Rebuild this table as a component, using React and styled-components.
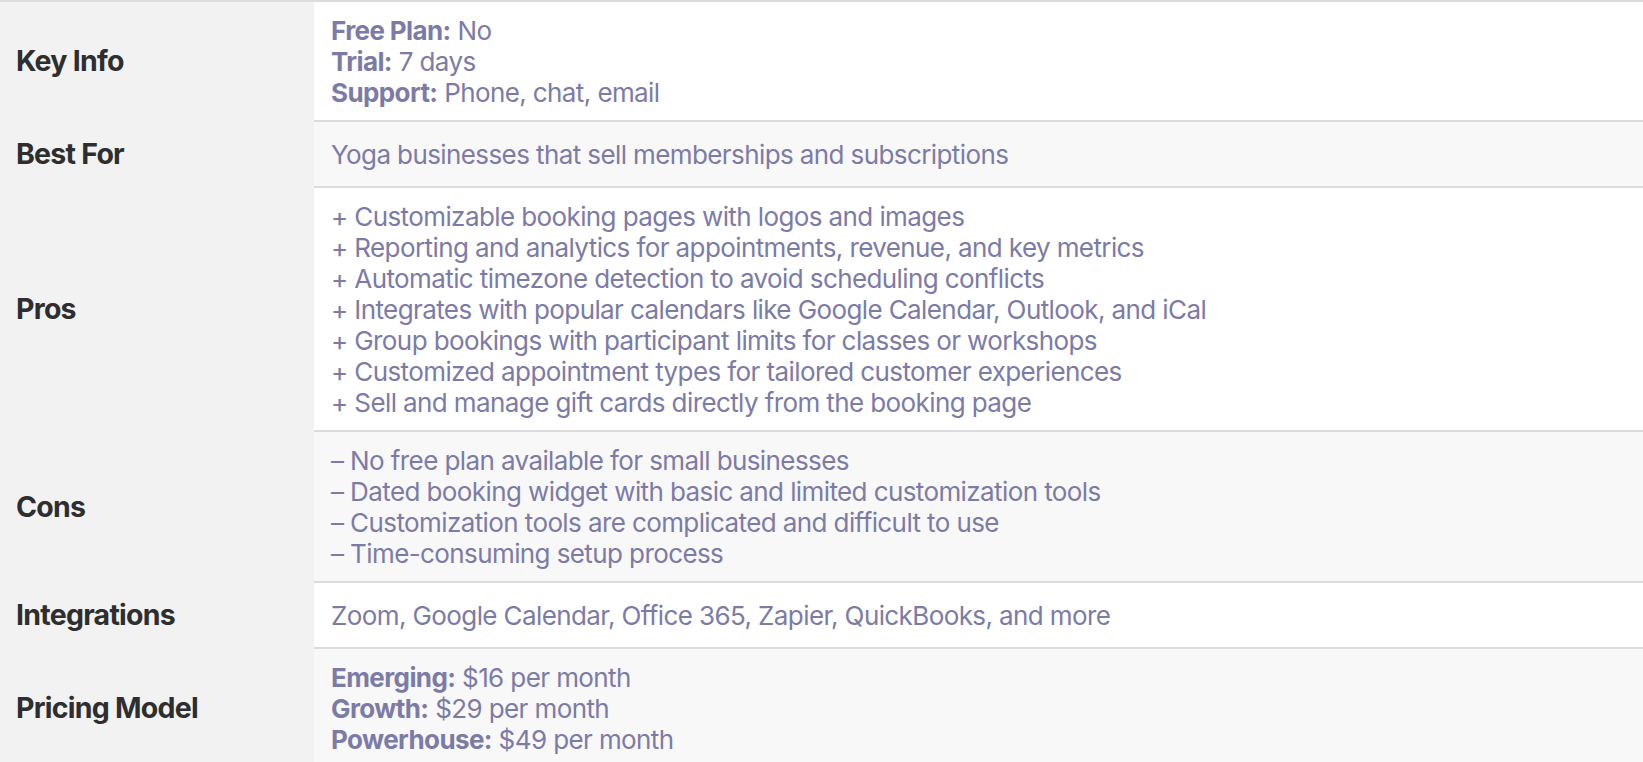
import React from "react";
import styled, { createGlobalStyle } from "styled-components";

const Global = createGlobalStyle`
  html, body { margin: 0; padding: 0; background: #ffffff; }
  body { font-family: Inter, "Noto Sans", sans-serif; }
`;

const Table = styled.div`
  display: grid;
  grid-template-columns: 314px 1fr;
  border-top: 2px solid #dcdcdc;
  width: 100%;
`;

const Label = styled.div`
  background: #f2f2f2;
  display: flex;
  align-items: center;
  padding: 16px;
  font-size: 28.5px;
  line-height: 32px;
  font-weight: 700;
  letter-spacing: -0.75px;
  color: #2e2e2e;
  border-bottom: 2px solid #f2f2f2;
`;

const Cell = styled.div`
  background: ${(p) => (p.$shade ? "#f8f8f8" : "#ffffff")};
  border-bottom: 2px solid #dcdcdc;
  padding: 12.5px 17px;
  display: flex;
  flex-direction: column;
  justify-content: center;
  font-size: 26px;
  line-height: 31px;
  letter-spacing: -0.6px;
  color: #7c7ba7;
`;

const Line = styled.div`
  white-space: nowrap;
`;

const Strong = styled.b`
  font-weight: 700;
`;

const rows = [
  {
    label: "Key Info",
    lines: [
      ["Free Plan:", " No"],
      ["Trial:", " 7 days"],
      ["Support:", " Phone, chat, email"],
    ],
  },
  { label: "Best For", lines: [[null, "Yoga businesses that sell memberships and subscriptions"]] },
  {
    label: "Pros",
    lines: [
      [null, "+ Customizable booking pages with logos and images"],
      [null, "+ Reporting and analytics for appointments, revenue, and key metrics"],
      [null, "+ Automatic timezone detection to avoid scheduling conflicts"],
      [null, "+ Integrates with popular calendars like Google Calendar, Outlook, and iCal"],
      [null, "+ Group bookings with participant limits for classes or workshops"],
      [null, "+ Customized appointment types for tailored customer experiences"],
      [null, "+ Sell and manage gift cards directly from the booking page"],
    ],
  },
  {
    label: "Cons",
    lines: [
      [null, "– No free plan available for small businesses"],
      [null, "– Dated booking widget with basic and limited customization tools"],
      [null, "– Customization tools are complicated and difficult to use"],
      [null, "– Time-consuming setup process"],
    ],
  },
  { label: "Integrations", lines: [[null, "Zoom, Google Calendar, Office 365, Zapier, QuickBooks, and more"]] },
  {
    label: "Pricing Model",
    lines: [
      ["Emerging:", " $16 per month"],
      ["Growth:", " $29 per month"],
      ["Powerhouse:", " $49 per month"],
    ],
  },
];

export default function App() {
  return (
    <>
      <Global />
      <Table>
        {rows.map((r, i) => (
          <React.Fragment key={r.label}>
            <Label>{r.label}</Label>
            <Cell $shade={i % 2 === 1}>
              {r.lines.map(([b, t], j) => (
                <Line key={j}>
                  {b && <Strong>{b}</Strong>}
                  {t}
                </Line>
              ))}
            </Cell>
          </React.Fragment>
        ))}
      </Table>
    </>
  );
}
